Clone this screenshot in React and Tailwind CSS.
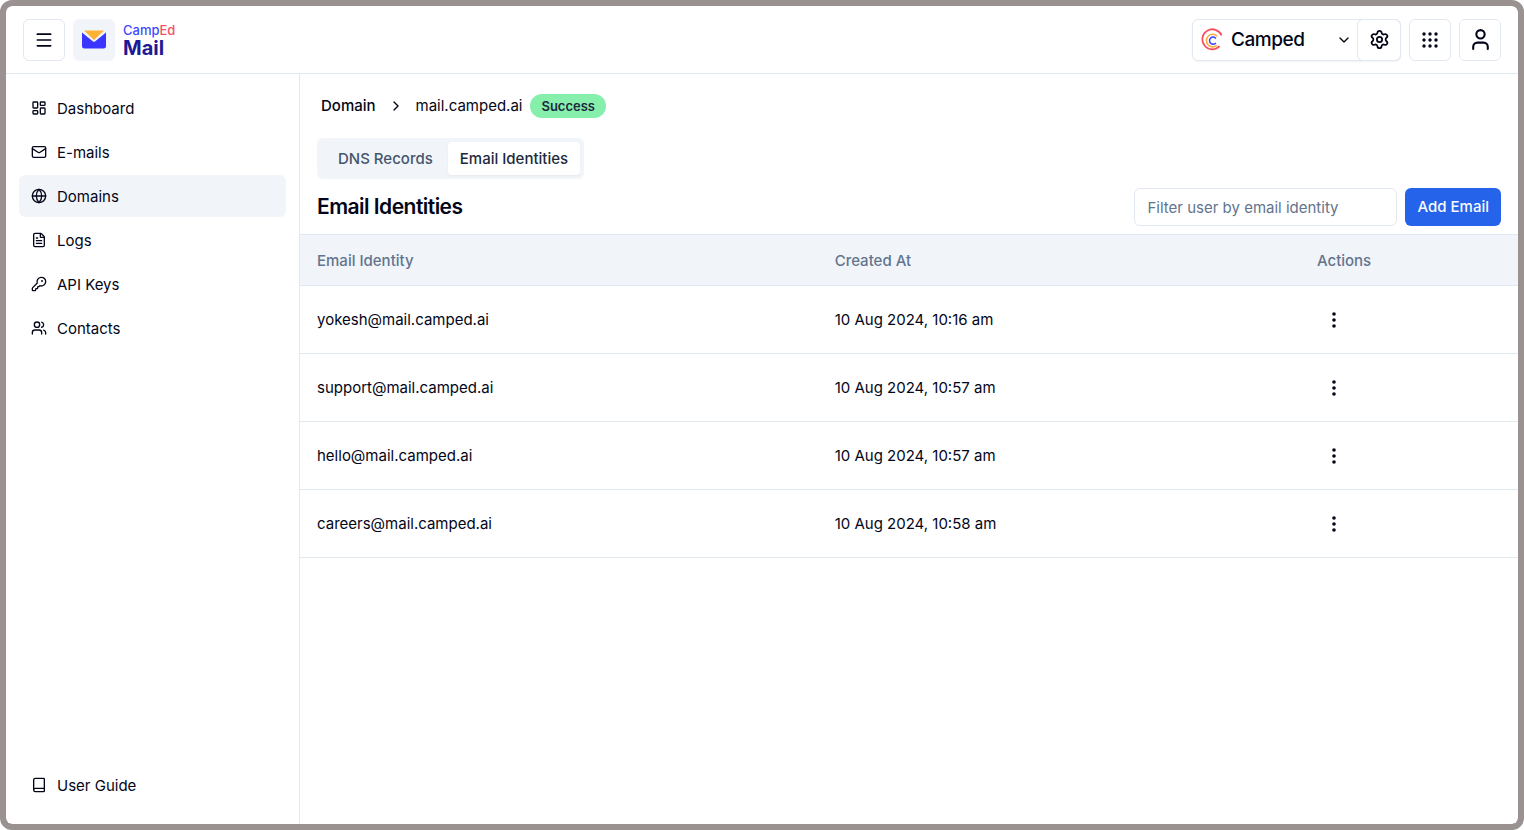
import { useState } from "react";
import {
  Book,
  ChevronDown,
  ChevronRight,
  FileText,
  Globe,
  KeyRound,
  LayoutDashboard,
  Mail,
  Menu,
  Settings,
  User,
  Users,
} from "lucide-react";

const navItems = [
  { name: "Dashboard", icon: LayoutDashboard },
  { name: "E-mails", icon: Mail },
  { name: "Domains", icon: Globe, active: true },
  { name: "Logs", icon: FileText },
  { name: "API Keys", icon: KeyRound },
  { name: "Contacts", icon: Users },
];

const identities = [
  { email: "yokesh@mail.camped.ai", createdAt: "10 Aug 2024, 10:16 am" },
  { email: "support@mail.camped.ai", createdAt: "10 Aug 2024, 10:57 am" },
  { email: "hello@mail.camped.ai", createdAt: "10 Aug 2024, 10:57 am" },
  { email: "careers@mail.camped.ai", createdAt: "10 Aug 2024, 10:58 am" },
];

function MailLogo() {
  return (
    <svg width="26" height="20" viewBox="0 0 26 20" aria-hidden="true">
      <path d="M1 2.5 L12 11.4 Q13 12.2 14 11.4 L25 2.5 V16 Q25 18.5 22.5 18.5 H3.5 Q1 18.5 1 16 Z" fill="#3a36ff" />
      <path d="M3 0.5 H23 L13.6 9.4 Q13 9.9 12.4 9.4 Z" fill="#ffb135" />
    </svg>
  );
}

function CampedLogo() {
  return (
    <svg width="22" height="24" viewBox="0 0 22 24" fill="none" aria-hidden="true">
      <path d="M20.6 7.4 A10 10 0 1 0 18.6 18.2" stroke="#f94f63" strokeWidth="1.8" />
      <path d="M16.2 8.2 A6.3 6.3 0 1 0 15.8 17.4" stroke="#ffae3b" strokeWidth="1.6" />
      <path d="M14.9 10.4 A3.6 3.6 0 1 0 14.9 15" stroke="#3a3dff" strokeWidth="1.5" />
    </svg>
  );
}

function DotsGrid() {
  return (
    <svg width="18" height="18" viewBox="0 0 18 18" fill="currentColor" aria-hidden="true">
      {[3, 9, 15].map((y) => [3, 9, 15].map((x) => <circle key={`${x}-${y}`} cx={x} cy={y} r="1.7" />))}
    </svg>
  );
}

function DotsVertical() {
  return (
    <svg width="6" height="18" viewBox="0 0 6 18" fill="currentColor" aria-hidden="true">
      <circle cx="3" cy="3" r="1.8" />
      <circle cx="3" cy="9" r="1.8" />
      <circle cx="3" cy="15" r="1.8" />
    </svg>
  );
}

function NavLink({ name, icon: Icon, active }) {
  return (
    <a
      href="#"
      className={`flex h-[42px] items-center gap-[10px] rounded-md px-3 text-[15px] leading-[25px] ${active ? "bg-slate-100" : "hover:bg-slate-50"}`}
    >
      <Icon size={16} />
      {name}
    </a>
  );
}

export default function App() {
  const [filter, setFilter] = useState("");
  const rows = identities.filter((item) => item.email.includes(filter));

  return (
    <div className="flex h-screen flex-col overflow-hidden rounded-xl border-[6px] border-[#999291] bg-[#999291] font-['Inter',sans-serif] text-slate-950">
      <div className="flex min-h-0 flex-1 flex-col overflow-hidden rounded-md bg-white">
        <header className="flex h-[68px] shrink-0 items-center justify-between border-b border-slate-200 px-[17px]">
          <div className="flex items-center gap-2">
            <button aria-label="Toggle menu" className="flex size-[42px] items-center justify-center rounded-md border border-slate-200">
              <Menu size={20} />
            </button>
            <a href="#" className="flex items-center gap-2">
              <span className="flex size-[42px] items-center justify-center rounded-md bg-slate-100">
                <MailLogo />
              </span>
              <span className="flex flex-col">
                <span className="text-[13px] leading-4 font-medium text-[#3d4bff]">
                  Camp<span className="text-[#f94f63]">Ed</span>
                </span>
                <span className="text-[20px] leading-5 font-bold text-[#1d1b94]">Mail</span>
              </span>
            </a>
          </div>
          <div className="flex items-center gap-2">
            <div className="flex rounded-md border border-slate-200 shadow-xs">
              <button className="flex w-[165px] items-center gap-2 pr-1.5 pl-2 text-[19px] leading-[25px] font-medium tracking-tight">
                <CampedLogo />
                Camped
                <ChevronDown size={16} className="ml-auto" />
              </button>
              <button aria-label="Settings" className="-m-px flex h-[42px] w-[44px] items-center justify-center rounded-md border border-slate-200">
                <Settings size={21} />
              </button>
            </div>
            <button aria-label="Apps" className="flex size-[42px] items-center justify-center rounded-md border border-slate-200">
              <DotsGrid />
            </button>
            <button aria-label="Account" className="flex size-[42px] items-center justify-center rounded-md border border-slate-200">
              <User size={25} />
            </button>
          </div>
        </header>

        <div className="flex min-h-0 flex-1">
          <aside className="flex w-[294px] shrink-0 flex-col justify-between border-r border-slate-200 px-[13px] pt-[13px] pb-[18px]">
            <nav className="flex flex-col gap-0.5">
              {navItems.map((item) => (
                <NavLink key={item.name} {...item} />
              ))}
            </nav>
            <NavLink name="User Guide" icon={Book} />
          </aside>

          <main className="min-w-0 flex-1">
            <div className="px-[17px] pt-5">
              <div className="flex h-6 items-center pl-1 text-[15px] leading-6">
                <a href="#" className="font-medium">Domain</a>
                <ChevronRight size={16} className="mx-3" />
                <span>mail.camped.ai</span>
                <span className="ml-2 rounded-full bg-[#86efac] px-[11px] text-[13px] leading-6 font-semibold text-slate-800">Success</span>
              </div>

              <div className="mt-5 flex h-[41px] w-fit items-center rounded-md bg-slate-100 px-1 text-[15px] leading-6 font-medium">
                <button className="h-[33px] pr-[15px] pl-[17px] text-slate-600">DNS Records</button>
                <button className="h-[33px] rounded bg-white px-3 text-slate-800 shadow-xs">Email Identities</button>
              </div>

              <div className="mt-[9px] mb-2 flex items-center justify-between">
                <h1 className="text-[21px] font-semibold tracking-tight">Email Identities</h1>
                <div className="flex gap-2">
                  <input
                    type="text"
                    aria-label="Filter user by email identity"
                    placeholder="Filter user by email identity"
                    value={filter}
                    onChange={(e) => setFilter(e.target.value)}
                    className="h-[38px] w-[263px] rounded-md border border-slate-200 px-3 text-[15px] leading-6 placeholder:text-slate-500"
                  />
                  <button className="h-[38px] rounded-md bg-[#2563eb] px-3 text-[15px] leading-6 font-medium text-slate-50">Add Email</button>
                </div>
              </div>
            </div>

            <table className="w-full table-fixed border-collapse text-left text-[15px] leading-6">
              <thead>
                <tr className="h-[51px] border-y border-slate-200 bg-slate-100 leading-[25px] text-slate-500">
                  <th className="w-[42.5%] px-[17px] font-medium">Email Identity</th>
                  <th className="w-[39.6%] px-[17px] font-medium">Created At</th>
                  <th className="px-[17px] font-medium">Actions</th>
                </tr>
              </thead>
              <tbody>
                {rows.map((item) => (
                  <tr key={item.email} className="h-[68px] border-b border-slate-200">
                    <td className="px-[17px]">{item.email}</td>
                    <td className="px-[17px]">{item.createdAt}</td>
                    <td className="px-[17px]">
                      <button aria-label={`Actions for ${item.email}`} className="flex size-[34px] items-center justify-center">
                        <DotsVertical />
                      </button>
                    </td>
                  </tr>
                ))}
              </tbody>
            </table>
          </main>
        </div>
      </div>
    </div>
  );
}
